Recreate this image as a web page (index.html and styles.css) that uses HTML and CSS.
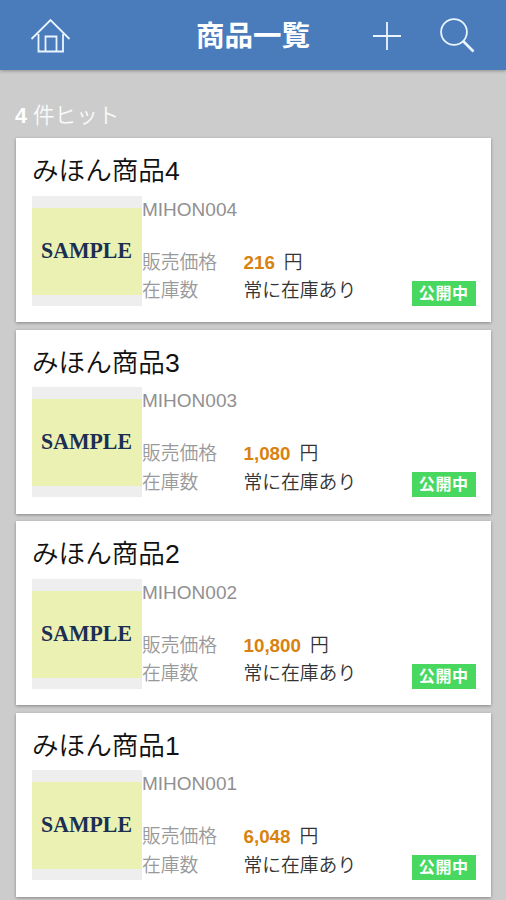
FILE: index.html
```html
<!DOCTYPE html>
<html lang="ja">
<head>
<meta charset="utf-8">
<title>商品一覧</title>
<link rel="stylesheet" href="styles.css">
</head>
<body>
<header class="bar">
  <svg class="home" width="42" height="38" viewBox="0 0 42 38"><path d="M1.500 22 20.500 3 39.500 22M8.500 17V34.500H33V17M15.500 34V19.500H26.500V34"/></svg>
  <h1>商品一覧</h1>
  <div class="actions">
    <svg width="30" height="30" viewBox="0 0 30 30"><path d="M15 1V29M1 15H29"/></svg>
    <svg width="36" height="36" viewBox="0 0 36 36"><circle cx="14" cy="14" r="12.900"/><path class="handle" d="M23 23 33.500 33.500"/></svg>
  </div>
</header>
<main>
  <p class="hits"><b>4</b> 件ヒット</p>
  <article class="card">
    <h2>みほん商品4</h2>
    <div class="body">
      <div class="thumb"><span><svg width="110" height="87"><text x="9" y="50" textLength="91" lengthAdjust="spacingAndGlyphs">SAMPLE</text></svg></span></div>
      <div class="info">
        <p class="code">MIHON004</p>
        <p class="row"><span class="label">販売価格</span><b>216</b><span class="yen">円</span></p>
        <p class="row"><span class="label">在庫数</span>常に在庫あり</p>
      </div>
      <span class="badge">公開中</span>
    </div>
  </article>
  <article class="card">
    <h2>みほん商品3</h2>
    <div class="body">
      <div class="thumb"><span><svg width="110" height="87"><text x="9" y="50" textLength="91" lengthAdjust="spacingAndGlyphs">SAMPLE</text></svg></span></div>
      <div class="info">
        <p class="code">MIHON003</p>
        <p class="row"><span class="label">販売価格</span><b>1,080</b><span class="yen">円</span></p>
        <p class="row"><span class="label">在庫数</span>常に在庫あり</p>
      </div>
      <span class="badge">公開中</span>
    </div>
  </article>
  <article class="card">
    <h2>みほん商品2</h2>
    <div class="body">
      <div class="thumb"><span><svg width="110" height="87"><text x="9" y="50" textLength="91" lengthAdjust="spacingAndGlyphs">SAMPLE</text></svg></span></div>
      <div class="info">
        <p class="code">MIHON002</p>
        <p class="row"><span class="label">販売価格</span><b>10,800</b><span class="yen">円</span></p>
        <p class="row"><span class="label">在庫数</span>常に在庫あり</p>
      </div>
      <span class="badge">公開中</span>
    </div>
  </article>
  <article class="card">
    <h2>みほん商品1</h2>
    <div class="body">
      <div class="thumb"><span><svg width="110" height="87"><text x="9" y="50" textLength="91" lengthAdjust="spacingAndGlyphs">SAMPLE</text></svg></span></div>
      <div class="info">
        <p class="code">MIHON001</p>
        <p class="row"><span class="label">販売価格</span><b>6,048</b><span class="yen">円</span></p>
        <p class="row"><span class="label">在庫数</span>常に在庫あり</p>
      </div>
      <span class="badge">公開中</span>
    </div>
  </article>
</main>
</body>
</html>
```
FILE: styles.css
```css
* { box-sizing: border-box; margin: 0; padding: 0; }
html { height: 100%; overflow: hidden; }
body {
  height: 100%;
  overflow: hidden;
  background: #ccc;
  color: #333;
  font: 350 18.8px/28px "Liberation Sans", "Noto Sans CJK JP", sans-serif;
}
b { font-weight: 700; }
.bar {
  display: grid;
  grid-template-columns: 1fr auto 1fr;
  align-items: center;
  height: 70px;
  padding: 2px 30px 0 30px;
  background: #4a7cbc;
  box-shadow: 0 1px 3px rgba(0, 0, 0, .3);
}
.bar svg { fill: none; stroke: #eaf4ff; stroke-width: 1.8; }
.bar .handle { stroke-width: 2.6; }
.bar h1 { color: #fff; font-size: 28.5px; line-height: 68px; font-weight: 700; }
.actions { display: flex; justify-content: flex-end; align-items: center; gap: 38px; }
.hits {
  height: 68px;
  padding: 32px 0 0 15px;
  color: #fafafa;
  font-size: 21.6px;
}
.hits b { color: #fff; }
.card {
  height: 184px;
  margin: 0 15px 7.5px 16px;
  padding: 16px 15.5px 0 16px;
  background: #fff;
  box-shadow: 0 1px 3px rgba(0, 0, 0, .35);
}
.card h2 { height: 41.5px; padding-top: .4px; color: #111; font-size: 26.6px; line-height: 34px; font-weight: 350; }
.body { display: flex; height: 110px; }
.thumb { width: 110px; padding: 12px 0 11px; background: #eee; }
.thumb span { display: block; height: 87px; background: #eaf1b2; }
.thumb svg { display: block; }
.thumb text { font: 700 23.5px "Liberation Serif", serif; fill: #1b2f52; }
.info { flex: 1; white-space: nowrap; }
.code { height: 53px; color: #909090; font-size: 19px; line-height: 28px; }
.row { display: flex; height: 28.5px; line-height: 28px; }
.label { width: 101.5px; color: #999; }
.row b { color: #d8820f; }
.yen { margin-left: 9px; }
.badge {
  align-self: flex-end;
  width: 63.500px;
  height: 25px;
  background: #49d85f;
  color: #fff;
  font-size: 16px;
  font-weight: 700;
  line-height: 25px;
  letter-spacing: .6px;
  text-align: center;
}
```
